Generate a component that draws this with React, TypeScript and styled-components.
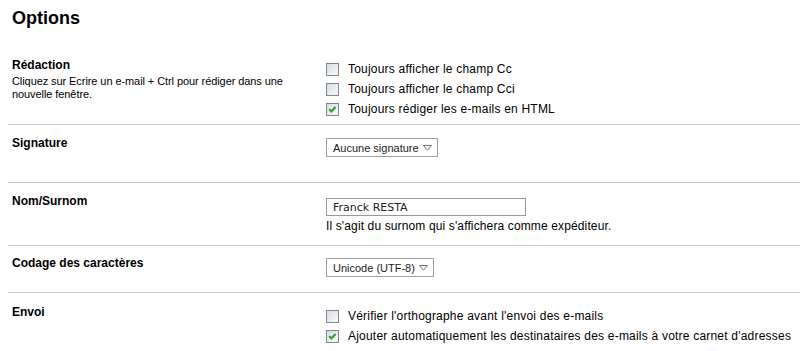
import React from "react";
import styled, { createGlobalStyle } from "styled-components";

const GlobalStyle = createGlobalStyle`
  html, body { margin: 0; padding: 0; background: #fff; }
  body { font-family: "Liberation Sans", Arial, sans-serif; color: #000; }
`;

const Page = styled.div`
  padding: 0 1px 0 8px;
  width: 801px;
  box-sizing: border-box;
`;

const Title = styled.h1`
  margin: 8px 0 17px 4px;
  font-size: 18px;
  line-height: 21px;
  font-weight: bold;
`;

const Row = styled.section<{ $pt: number; $pb: number; $last?: boolean }>`
  display: grid;
  grid-template-columns: 314px 1fr;
  padding: ${(p) => p.$pt}px 0 ${(p) => p.$pb}px 4px;
  border-bottom: ${(p) => (p.$last ? "none" : "1px solid #c9c9c9")};
`;

const LabelCol = styled.div`
  display: flex;
  flex-direction: column;
`;

const Label = styled.div`
  font-size: 12px;
  line-height: 15px;
  font-weight: bold;
`;

const Desc = styled.div`
  margin-top: 2px;
  font-size: 11px;
  line-height: 13px;
  letter-spacing: -0.08px;
  max-width: 290px;
`;

const ControlCol = styled.div`
  display: flex;
  flex-direction: column;
  align-items: flex-start;
`;

const CheckList = styled.div`
  margin-top: 1px;
  display: flex;
  flex-direction: column;
`;

const CheckItem = styled.label`
  display: flex;
  align-items: center;
  gap: 9px;
  height: 20px;
  font-size: 12px;
  letter-spacing: 0.21px;
`;

const Box = styled.span`
  display: inline-flex;
  width: 13px;
  height: 13px;
  flex: none;
`;

const Select = styled.div<{ $mt: number }>`
  margin-top: ${(p) => p.$mt}px;
  display: inline-flex;
  align-items: center;
  gap: 4px;
  height: 19px;
  box-sizing: border-box;
  padding: 0 5px 0 6px;
  border: 1px solid #a0a0a0;
  font-size: 11px;
  color: #222;
`;

const TextInput = styled.input`
  margin-top: 4px;
  width: 200px;
  height: 18px;
  box-sizing: border-box;
  border: 1px solid #989898;
  padding: 0 0 0 6px;
  font-family: "DejaVu Sans", Verdana, sans-serif;
  font-size: 11px;
  color: #222;
  outline: none;
`;

const Help = styled.div`
  margin-top: 3px;
  font-size: 12px;
  line-height: 15px;
  letter-spacing: 0.13px;
`;

function CheckBox({ checked }: { checked?: boolean }) {
  return (
    <Box role="checkbox" aria-checked={!!checked}>
      <svg width="13" height="13" viewBox="0 0 13 13">
        <defs>
          <linearGradient id="cbg" x1="0" y1="0" x2="1" y2="1">
            <stop offset="0" stopColor="#d6dbe0" />
            <stop offset="1" stopColor="#fbfbfb" />
          </linearGradient>
        </defs>
        <rect x="0.5" y="0.5" width="12" height="12" fill="url(#cbg)" stroke="#7f8790" />
        {checked && (
          <polyline
            points="3.2,6.2 5.3,8.5 9.6,4"
            fill="none"
            stroke="#2f9e2f"
            strokeWidth="2"
          />
        )}
      </svg>
    </Box>
  );
}

function Arrow() {
  return (
    <svg width="9" height="6" viewBox="0 0 9 6">
      <polygon points="0.5,0.5 8.5,0.5 4.5,5.2" fill="#fff" stroke="#777" strokeWidth="1" />
    </svg>
  );
}

export default function App() {
  return (
    <Page>
      <GlobalStyle />
      <Title>Options</Title>

      <Row $pt={12} $pb={5}>
        <LabelCol>
          <Label>Rédaction</Label>
          <Desc>Cliquez sur Ecrire un e-mail + Ctrl pour rédiger dans une nouvelle fenêtre.</Desc>
        </LabelCol>
        <ControlCol>
          <CheckList>
            <CheckItem>
              <CheckBox />
              Toujours afficher le champ Cc
            </CheckItem>
            <CheckItem>
              <CheckBox />
              Toujours afficher le champ Cci
            </CheckItem>
            <CheckItem>
              <CheckBox checked />
              Toujours rédiger les e-mails en HTML
            </CheckItem>
          </CheckList>
        </ControlCol>
      </Row>

      <Row $pt={11} $pb={25}>
        <LabelCol>
          <Label>Signature</Label>
        </LabelCol>
        <ControlCol>
          <Select $mt={2}>
            Aucune signature
            <Arrow />
          </Select>
        </ControlCol>
      </Row>

      <Row $pt={11} $pb={11}>
        <LabelCol>
          <Label>Nom/Surnom</Label>
        </LabelCol>
        <ControlCol>
          <TextInput defaultValue="Franck RESTA" readOnly />
          <Help>Il s'agit du surnom qui s'affichera comme expéditeur.</Help>
        </ControlCol>
      </Row>

      <Row $pt={10} $pb={15}>
        <LabelCol>
          <Label>Codage des caractères</Label>
        </LabelCol>
        <ControlCol>
          <Select $mt={2}>
            Unicode (UTF-8)
            <Arrow />
          </Select>
        </ControlCol>
      </Row>

      <Row $pt={12} $pb={0} $last>
        <LabelCol>
          <Label>Envoi</Label>
        </LabelCol>
        <ControlCol>
          <CheckList>
            <CheckItem>
              <CheckBox />
              Vérifier l'orthographe avant l'envoi des e-mails
            </CheckItem>
            <CheckItem>
              <CheckBox checked />
              Ajouter automatiquement les destinataires des e-mails à votre carnet d'adresses
            </CheckItem>
          </CheckList>
        </ControlCol>
      </Row>
    </Page>
  );
}
